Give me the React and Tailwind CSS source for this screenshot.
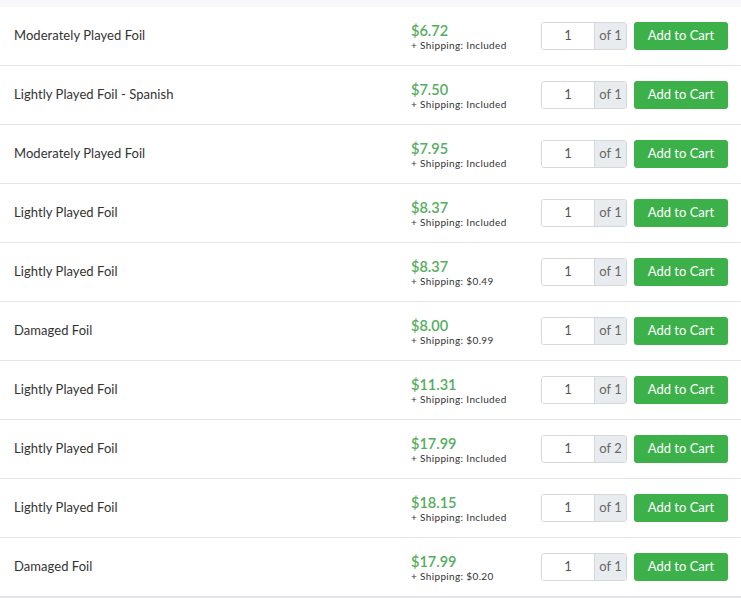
const rows = [
  ["Moderately Played Foil", "$6.72", "Included", 1],
  ["Lightly Played Foil - Spanish", "$7.50", "Included", 1],
  ["Moderately Played Foil", "$7.95", "Included", 1],
  ["Lightly Played Foil", "$8.37", "Included", 1],
  ["Lightly Played Foil", "$8.37", "$0.49", 1],
  ["Damaged Foil", "$8.00", "$0.99", 1],
  ["Lightly Played Foil", "$11.31", "Included", 1],
  ["Lightly Played Foil", "$17.99", "Included", 2],
  ["Lightly Played Foil", "$18.15", "Included", 1],
  ["Damaged Foil", "$17.99", "$0.20", 1],
];

export default function App() {
  return (
    <div className="w-[741px] h-[598px] bg-[#f8f8fa] pt-[7px] overflow-hidden" style={{ fontFamily: "Lato, 'Open Sans', sans-serif" }}>
      <div className="bg-white">
        {rows.map(([name, price, ship, qty], i) => (
          <div key={i} className="flex items-center h-[59px] border-b border-[#e4e4e6]">
            <div className="w-[411px] pl-[14px] text-[13px] text-[#333] tracking-[0.05px]">{name}</div>
            <div className="w-[130px] flex flex-col pt-[1px]">
              <span className="text-[14.5px] font-semibold text-[#55ad5e] leading-[17px]">{price}</span>
              <span className="text-[10px] text-[#333] leading-[13px] tracking-[0.35px]">+ Shipping: {ship}</span>
            </div>
            <div className="flex h-[28px] w-[86px] border border-[#d4d7db] rounded-[3px] overflow-hidden">
              <div className="w-[52px] bg-white flex items-center justify-center text-[13px] text-[#555]">1</div>
              <div className="flex-1 bg-[#e9ecef] border-l border-[#d4d7db] flex items-center justify-center text-[13px] text-[#666]">of {qty}</div>
            </div>
            <button className="ml-[7px] w-[94px] h-[28px] rounded-[3px] bg-[#3cb14a] text-white text-[13px]">Add to Cart</button>
          </div>
        ))}
      </div>
      <div className="h-[2px] bg-[#e6e6e8]" />
    </div>
  );
}
